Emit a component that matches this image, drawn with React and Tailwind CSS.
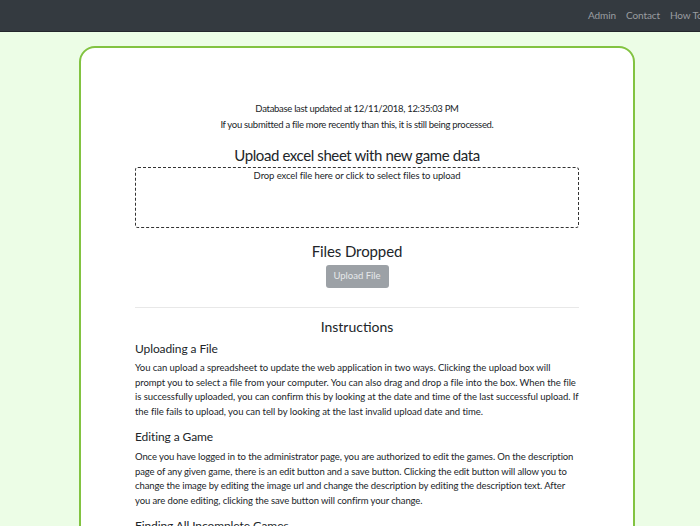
import React from "react";

export default function App() {
  return (
    <div className="min-h-[526px] bg-[#ecfde6] text-[#212529] overflow-hidden" style={{ fontFamily: "Lato, 'Open Sans', sans-serif" }}>
      <nav className="h-[32px] bg-[#343a40] border-b border-[#23272b] flex items-center overflow-hidden whitespace-nowrap">
        <div className="flex gap-[10px] text-[10px] tracking-[-0.1px] text-[#9a9da1] ml-[588px]">
          <span>Admin</span>
          <span>Contact</span>
          <span>How To</span>
        </div>
      </nav>
      <div className="pt-[14px]">
        <div className="ml-[79px] w-[556px] bg-white border-2 border-[#82c341] rounded-[16px] px-[54px] pt-[53px] pb-[60px]">
          <div className="text-center text-[9.5px] leading-[16px] tracking-[-0.3px]">
            <p>Database last updated at 12/11/2018, 12:35:03 PM</p>
            <p>If you submitted a file more recently than this, it is still being processed.</p>
          </div>
          <h2 className="text-center text-[15px] leading-[20px] tracking-[-0.4px] mt-[12px]">Upload excel sheet with new game data</h2>
          <div className="mt-[2px] h-[61px] border-[1.5px] border-dashed border-[#333] rounded-[3px] text-center text-[9.5px] tracking-[-0.1px] leading-[14px] pt-[1px]">
            Drop excel file here or click to select files to upload
          </div>
          <h3 className="text-center text-[15px] leading-[20px] tracking-[-0.1px] mt-[13px]">Files Dropped</h3>
          <div className="flex justify-center mt-[4px]">
            <button className="w-[63px] h-[23px] rounded-[3px] bg-[#9ca1a6] text-[#e6e8ea] text-[9.5px]">Upload File</button>
          </div>
          <hr className="mt-[19px] border-t border-[#e8e8e8]" />
          <h3 className="text-center text-[14px] leading-[20px] mt-[9px]">Instructions</h3>
          <h4 className="text-[12px] leading-[18px] tracking-[-0.1px] mt-[3px]">Uploading a File</h4>
          <p className="text-[9.5px] leading-[14.5px] tracking-[-0.05px] mt-[3px]">
            You can upload a spreadsheet to update the web application in two ways. Clicking the upload box will<br />
            prompt you to select a file from your computer. You can also drag and drop a file into the box. When the file<br />
            is successfully uploaded, you can confirm this by looking at the date and time of the last successful upload. If<br />
            the file fails to upload, you can tell by looking at the last invalid upload date and time.
          </p>
          <h4 className="text-[12px] leading-[18px] tracking-[-0.1px] mt-[9px]">Editing a Game</h4>
          <p className="text-[9.5px] leading-[14.5px] tracking-[-0.1px] mt-[4px]">
            Once you have logged in to the administrator page, you are authorized to edit the games. On the description page of any given game, there is an edit button and a save button. Clicking the edit button will allow you to change the image by editing the image url and change the description by editing the description text. After you are done editing, clicking the save button will confirm your change.
          </p>
          <h4 className="text-[12px] leading-[18px] tracking-[-0.1px] mt-[9px]">Finding All Incomplete Games</h4>
        </div>
      </div>
    </div>
  );
}
